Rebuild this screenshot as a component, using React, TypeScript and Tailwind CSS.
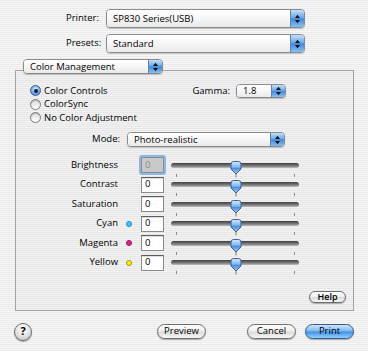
import React from "react";

function Arrows() {
  return (
    <svg width="7" height="10" viewBox="0 0 7 10">
      <path d="M3.5 0.8 L6 4 H1 Z" fill="#111" />
      <path d="M3.5 9.2 L6 6 H1 Z" fill="#111" />
    </svg>
  );
}

function Popup({ text, className }: { text: string; className: string }) {
  return (
    <div
      className={
        "flex overflow-hidden rounded-[4px] border border-[#8a8a8a] shadow-[0_1px_1px_rgba(0,0,0,0.2)] " +
        className
      }
    >
      <div className="flex flex-1 items-center pl-[6px] leading-none text-black bg-[image:linear-gradient(to_bottom,#ffffff,#f6f6f6_50%,#e9e9e9_100%)]">
        {text}
      </div>
      <div className="flex w-[14px] items-center justify-center border-l border-[#5f82b8] bg-[image:linear-gradient(to_bottom,#c4dffa,#6aa9ea_45%,#3f88dc_52%,#86c0f2_100%)]">
        <Arrows />
      </div>
    </div>
  );
}

function Radio({ on }: { on?: boolean }) {
  return on ? (
    <div className="flex h-[11px] w-[11px] items-center justify-center rounded-full border border-[#3a5c93] bg-[image:radial-gradient(circle_at_50%_35%,#d6ebff,#6aa8ec_60%,#2f6fc4)]">
      <div className="h-[4px] w-[4px] rounded-full bg-[#0c1830]" />
    </div>
  ) : (
    <div className="h-[11px] w-[11px] rounded-full border border-[#7a7a7a] bg-[image:linear-gradient(to_bottom,#dcdcdc,#ffffff)] shadow-[inset_0_1px_1px_rgba(0,0,0,0.2)]" />
  );
}

function Thumb() {
  return (
    <svg width="12" height="17" viewBox="0 0 12 17">
      <defs>
        <linearGradient id="tg" x1="0" y1="0" x2="0" y2="1">
          <stop offset="0" stopColor="#d8ecff" />
          <stop offset="0.45" stopColor="#7db7ef" />
          <stop offset="0.55" stopColor="#4a90e0" />
          <stop offset="1" stopColor="#9fd0fb" />
        </linearGradient>
      </defs>
      <line x1="6" y1="12" x2="6" y2="16.5" stroke="#7a7a7a" strokeWidth="1" />
      <path
        d="M1 3 Q1 0.5 3.5 0.5 H8.5 Q11 0.5 11 3 V8 L6 13 L1 8 Z"
        fill="url(#tg)"
        stroke="#3b5f97"
        strokeWidth="1"
      />
    </svg>
  );
}

function Slider() {
  return (
    <div className="relative ml-[7px] h-[19px] w-[128px]">
      <div className="absolute left-0 right-0 top-[7px] h-[5px] rounded-full bg-[image:linear-gradient(to_bottom,#3f3f3f,#7d7d7d_60%,#bdbdbd)]" />
      <div className="absolute left-[5px] top-[18px] h-[3px] w-px bg-[#8a8a8a]" />
      <div className="absolute left-[123px] top-[18px] h-[3px] w-px bg-[#8a8a8a]" />
      <div className="absolute left-[59px] top-[5px]">
        <Thumb />
      </div>
    </div>
  );
}

function Dot({ color }: { color: string }) {
  if (color === "cyan")
    return <div className="h-[6px] w-[6px] rounded-full border border-[#1f86c8] bg-[#3cc8ff]" />;
  if (color === "magenta")
    return <div className="h-[6px] w-[6px] rounded-full border border-[#a8105f] bg-[#ec1a8f]" />;
  if (color === "yellow")
    return <div className="h-[6px] w-[6px] rounded-full border border-[#a89a00] bg-[#fff200]" />;
  return null;
}

function SliderRow({ label, dot, focused }: { label: string; dot?: string; focused?: boolean }) {
  return (
    <div className="flex h-[19.5px] items-center">
      <div className="w-[102px] text-right">{label}</div>
      <div className="flex w-[23px] justify-center pr-[2px]">{dot ? <Dot color={dot} /> : null}</div>
      {focused ? (
        <div className="flex h-[16px] w-[23px] items-center rounded-[1px] border border-[#8a8a8a] bg-[#c9c9c9] pl-[3px] text-[#8c8c8c] shadow-[0_0_0_2px_#8ab8ec]">
          0
        </div>
      ) : (
        <div className="flex h-[16px] w-[23px] items-center border border-[#8a8a8a] border-t-[#5e5e5e] bg-white pl-[3px] shadow-[inset_0_1px_1px_rgba(0,0,0,0.15)]">
          0
        </div>
      )}
      <Slider />
    </div>
  );
}

function Button({ label, className }: { label: string; className: string }) {
  return (
    <div
      className={
        "flex h-[15px] w-[49px] items-center justify-center rounded-full border border-[#6d6d6d] bg-[image:linear-gradient(to_bottom,#ffffff,#eeeeee_48%,#dadada_52%,#f7f7f7)] shadow-[0_1px_1px_rgba(0,0,0,0.3)] " +
        className
      }
    >
      {label}
    </div>
  );
}

export default function App() {
  return (
    <div className="flex h-[351px] w-[368px] flex-col overflow-hidden pt-[9px] font-['Lucida_Grande','Open_Sans',sans-serif] text-[9.5px] text-black bg-[image:repeating-linear-gradient(to_bottom,#ebebeb_0px,#ebebeb_1px,#f6f6f6_1px,#f6f6f6_2px)]">
      <div className="flex h-[19px] items-center">
        <div className="ml-[66px] w-[40px]">Printer:</div>
        <Popup text="SP830 Series(USB)" className="h-[19px] w-[199px]" />
      </div>
      <div className="mt-[6px] flex h-[19px] items-center">
        <div className="ml-[66px] w-[40px]">Presets:</div>
        <Popup text="Standard" className="h-[19px] w-[199px]" />
      </div>

      <div className="ml-[15px] mt-[6px] w-[339px]">
        <div className="relative z-10 ml-[8px] w-[140px]">
          <Popup text="Color Management" className="h-[15px] w-[140px]" />
        </div>
        <div className="-mt-[4px] flex h-[241px] flex-col border border-[#a3a3a3] bg-[rgba(0,0,0,0.015)]">
          <div className="mt-[13px] flex flex-col pl-[14px]">
            <div className="flex h-[13.5px] items-center justify-between pr-[67px]">
              <div className="flex items-center gap-[3px]">
                <Radio on />
                <span>Color Controls</span>
              </div>
              <div className="flex items-center">
                <span className="mr-[6px]">Gamma:</span>
                <Popup text="1.8" className="h-[14px] w-[50px]" />
              </div>
            </div>
            <div className="flex h-[13.5px] items-center gap-[3px]">
              <Radio />
              <span>ColorSync</span>
            </div>
            <div className="flex h-[13.5px] items-center gap-[3px]">
              <Radio />
              <span>No Color Adjustment</span>
            </div>
          </div>

          <div className="mt-[7.5px] flex h-[15px] items-center">
            <div className="w-[104px] text-right">Mode:</div>
            <Popup text="Photo-realistic" className="ml-[7px] h-[15px] w-[158px]" />
          </div>

          <div className="mt-[8.25px] flex flex-col">
            <SliderRow label="Brightness" focused />
            <SliderRow label="Contrast" />
            <SliderRow label="Saturation" />
            <SliderRow label="Cyan" dot="cyan" />
            <SliderRow label="Magenta" dot="magenta" />
            <SliderRow label="Yellow" dot="yellow" />
          </div>

          <div className="mt-auto flex justify-end pb-[7px] pr-[7px]">
            <div className="flex h-[12px] w-[37px] items-center justify-center rounded-full border border-[#6d6d6d] text-[9px] font-semibold bg-[image:linear-gradient(to_bottom,#ffffff,#eeeeee_48%,#dadada_52%,#f7f7f7)] shadow-[0_1px_1px_rgba(0,0,0,0.3)]">
              Help
            </div>
          </div>
        </div>
      </div>

      <div className="ml-[14px] mt-[11.5px] flex h-[18px] items-center">
        <div className="flex h-[18px] w-[18px] items-center justify-center rounded-full border border-[#6d6d6d] text-[11px] font-bold bg-[image:radial-gradient(circle_at_50%_30%,#ffffff,#e2e2e2_55%,#bdbdbd)] shadow-[0_1px_1px_rgba(0,0,0,0.35)]">
          ?
        </div>
        <Button label="Preview" className="ml-[125px]" />
        <Button label="Cancel" className="ml-[41px]" />
        <div className="ml-[9px] flex h-[15px] w-[49px] items-center justify-center rounded-full border border-[#34578f] bg-[image:linear-gradient(to_bottom,#cde7fd,#78b6ef_48%,#3f8fe4_52%,#92d2ff)] shadow-[0_1px_1px_rgba(0,0,0,0.3)]">
          Print
        </div>
      </div>
    </div>
  );
}
